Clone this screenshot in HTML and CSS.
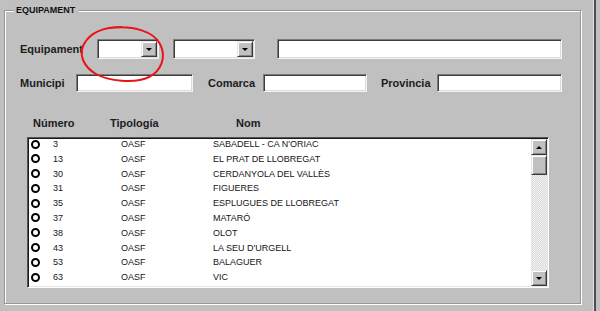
FILE: index.html
```html
<!DOCTYPE html>
<html>
<head>
  <title>Equipament</title>
  <link rel="stylesheet" href="styles.css">
</head>
<body>
  <div class="group">
    <span class="group-title">EQUIPAMENT</span>

    <div class="form-row first">
      <label class="lbl lbl-equip">Equipament</label>
      <div class="combo sunken combo-small">
        <span class="combo-field"></span>
        <span class="drop-btn raised"><i class="arrow-down"></i></span>
      </div>
      <div class="combo sunken combo-mid">
        <span class="combo-field"></span>
        <span class="drop-btn raised"><i class="arrow-down"></i></span>
      </div>
      <input type="text" class="field sunken field-name">
    </div>

    <div class="form-row second">
      <label class="lbl lbl-muni">Municipi</label>
      <input type="text" class="field sunken field-muni">
      <label class="lbl lbl-comarca">Comarca</label>
      <input type="text" class="field sunken field-comarca">
      <label class="lbl lbl-prov">Provincia</label>
      <input type="text" class="field sunken field-prov">
    </div>

    <div class="list-head">
      <span class="col-num">Número</span>
      <span class="col-tip">Tipología</span>
      <span class="col-nom">Nom</span>
    </div>

    <div class="list sunken-deep">
      <div class="rows" id="rows"></div>
      <div class="scrollbar">
        <span class="sb-btn raised"><i class="arrow-up"></i></span>
        <span class="sb-thumb raised"></span>
        <span class="sb-track"></span>
        <span class="sb-btn raised"><i class="arrow-down"></i></span>
      </div>
    </div>
  </div>

  <div class="edge"></div>

  <!-- anotació a mà sobre el primer desplegable -->
  <svg class="mark" width="600" height="311" viewBox="0 0 600 311">
    <path d="M110 28 C134 25, 154 32, 160 44 C167 57, 161 71, 149 77 C135 84, 108 81, 96 74 C84 67, 78 55, 84 44 C90 33, 102 27, 122 27" fill="none" stroke="#e8131b" stroke-width="2" stroke-linecap="round"/>
  </svg>

  <script>
    var equipaments = [
      ["3", "OASF", "SABADELL - CA N'ORIAC"],
      ["13", "OASF", "EL PRAT DE LLOBREGAT"],
      ["30", "OASF", "CERDANYOLA DEL VALLÈS"],
      ["31", "OASF", "FIGUERES"],
      ["35", "OASF", "ESPLUGUES DE LLOBREGAT"],
      ["37", "OASF", "MATARÓ"],
      ["38", "OASF", "OLOT"],
      ["43", "OASF", "LA SEU D'URGELL"],
      ["53", "OASF", "BALAGUER"],
      ["63", "OASF", "VIC"]
    ];

    var rows = document.getElementById("rows");
    equipaments.forEach(function(e) {
      var row = document.createElement("div");
      row.className = "row";
      row.innerHTML = '<span class="radio"></span><span>' + e[0] + '</span><span>' + e[1] + '</span><span>' + e[2] + '</span>';
      rows.appendChild(row);
    });
  </script>
</body>
</html>
```

FILE: styles.css
```css
/* Finestra */
body {
  margin: 0;
  width: 600px;
  height: 311px;
  display: flex;
  align-items: flex-start;
  background: #c0c0c0;
  font-family: 'Liberation Sans', Arial, sans-serif;
  color: #1a1a1a;
  overflow: hidden;
  position: relative;
}
.group {
  position: relative;
  box-sizing: border-box;
  width: 577px;
  height: 294px;
  margin: 10px 0 0 4px;
  padding: 28px 0 0 15px;
  border: 1px solid #969696;
  box-shadow: inset 1px 1px 0 #fff, 1px 1px 0 #fff;
}
.group-title {
  position: absolute;
  top: -6px;
  left: 9px;
  padding: 0 4px 0 2px;
  background: #c0c0c0;
  font-size: 9px;
  line-height: 11px;
  font-weight: bold;
  color: #111;
}
.edge {
  width: 2px;
  height: 311px;
  margin-left: 12px;
  border-left: 1px solid #e2e2e2;
  background: #4e4e4e;
}

/* 3D */
.sunken {
  border-style: solid;
  border-width: 1px;
  border-color: #7a7a7a #f4f4f4 #f4f4f4 #7a7a7a;
  box-shadow: inset 1px 1px 0 #3c3c3c, inset -1px -1px 0 #dcdcdc;
}
.sunken-deep {
  border-style: solid;
  border-width: 1px;
  border-color: #555 #fff #fff #555;
  box-shadow: inset 1px 1px 0 #1a1a1a, inset -1px -1px 0 #e6e6e6;
}
.raised {
  box-sizing: border-box;
  background: #c0c0c0;
  border-style: solid;
  border-width: 1px;
  border-color: #e4e4e4 #3a3a3a #3a3a3a #e4e4e4;
  box-shadow: inset 1px 1px 0 #fff, inset -1px -1px 0 #858585;
  display: flex;
  align-items: center;
  justify-content: center;
}
.arrow-down {
  width: 0;
  height: 0;
  border-left: 3px solid transparent;
  border-right: 3px solid transparent;
  border-top: 3px solid #000;
}
.arrow-up {
  width: 0;
  height: 0;
  border-left: 3px solid transparent;
  border-right: 3px solid transparent;
  border-bottom: 3px solid #000;
}

/* Formulari */
.form-row {
  display: flex;
  align-items: center;
}
.form-row.first {
  height: 20px;
}
.form-row.second {
  height: 18px;
  margin-top: 15px;
}
.lbl {
  font-size: 11px;
  font-weight: bold;
  color: #1c1c1c;
}
.lbl-equip { width: 77px; }
.lbl-muni { width: 56px; }
.lbl-comarca { width: 55px; margin-left: 15px; }
.lbl-prov { width: 56px; margin-left: 14px; }

.combo {
  box-sizing: border-box;
  height: 20px;
  display: flex;
  background: #fff;
  padding: 1px;
}
.combo-small { width: 62px; }
.combo-mid { width: 82px; margin-left: 14px; }
.combo-field { flex: 1; }
.drop-btn {
  width: 16px;
}
.field {
  box-sizing: border-box;
  height: 100%;
  margin: 0;
  padding: 0;
  background: #fff;
  outline: none;
}
.field-name { width: 285px; height: 20px; margin-left: 22px; }
.field-muni { width: 117px; }
.field-comarca { width: 104px; }
.field-prov { width: 125px; }

/* Llista */
.list-head {
  display: flex;
  margin-top: 25px;
  padding-left: 13px;
  height: 13px;
  line-height: 13px;
  font-size: 11px;
  font-weight: bold;
  color: #1c1c1c;
}
.col-num { width: 77px; }
.col-tip { width: 126px; }

.list {
  box-sizing: border-box;
  width: 522px;
  height: 151px;
  margin: 7px 0 0 7px;
  padding: 1px;
  display: flex;
  background: #fff;
}
.rows {
  flex: 1;
  overflow: hidden;
  padding-left: 2px;
  display: grid;
  grid-template-columns: 22px 68px 92px 1fr;
  grid-auto-rows: 14.8px;
  align-content: start;
}
.row {
  display: contents;
  font-size: 9px;
  line-height: 10px;
  color: #151515;
}
.row span {
  align-self: start;
}
.radio {
  box-sizing: border-box;
  width: 9px;
  height: 9px;
  margin-top: 0.5px;
  border: 2px solid #000;
  border-radius: 50%;
}
.scrollbar {
  width: 16px;
  display: flex;
  flex-direction: column;
}
.sb-btn {
  height: 16px;
}
.sb-thumb {
  height: 20px;
}
.sb-track {
  flex: 1;
  background: repeating-conic-gradient(#d9d9d9 0 25%, #f4f4f4 0 50%) 0 0 / 2px 2px;
}

.mark {
  position: absolute;
  left: 0;
  top: 0;
  pointer-events: none;
}
```
